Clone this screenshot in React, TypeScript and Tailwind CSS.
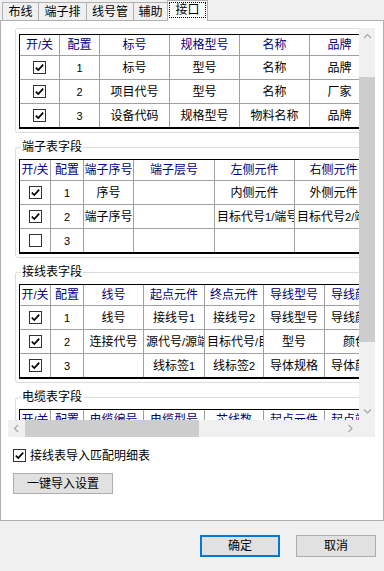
import type { ReactNode } from 'react'

type Cell = string | { text: string; left?: boolean }

interface FieldTable {
  title?: string
  cols: string[]
  header: string[]
  rows: { on: boolean; cells: Cell[] }[]
}

const tables: FieldTable[] = [
  {
    cols: ['w-[40px]', 'w-[40px]', 'w-[70px]', 'w-[70px]', 'w-[70px]', 'w-[60px]'],
    header: ['开/关', '配置', '标号', '规格型号', '名称', '品牌'],
    rows: [
      { on: true, cells: ['标号', '型号', '名称', '品牌'] },
      { on: true, cells: ['项目代号', '型号', '名称', '厂家'] },
      { on: true, cells: ['设备代码', '规格型号', '物料名称', '品牌'] },
    ],
  },
  {
    title: '端子表字段',
    cols: ['w-[31px]', 'w-[33px]', 'w-[50px]', 'w-[81px]', 'w-[80px]', 'w-[78px]'],
    header: ['开/关', '配置', '端子序号', '端子层号', '左侧元件', '右侧元件'],
    rows: [
      { on: true, cells: ['序号', '', '内侧元件', '外侧元件'] },
      {
        on: true,
        cells: ['端子序号', '', { text: '目标代号1/端号', left: true }, { text: '目标代号2/端号', left: true }],
      },
      { on: false, cells: ['', '', '', ''] },
    ],
  },
  {
    title: '接线表字段',
    cols: ['w-[31px]', 'w-[33px]', 'w-[60px]', 'w-[61px]', 'w-[59px]', 'w-[61px]', 'w-[61px]'],
    header: ['开/关', '配置', '线号', '起点元件', '终点元件', '导线型号', '导线颜色'],
    rows: [
      { on: true, cells: ['线号', '接线号1', '接线号2', '导线型号', '导线颜色'] },
      {
        on: true,
        cells: [
          '连接代号',
          { text: '源代号/源端号', left: true },
          { text: '目标代号/目标端号', left: true },
          '型号',
          '颜色',
        ],
      },
      { on: true, cells: ['', '线标签1', '线标签2', '导体规格', '导体颜色'] },
    ],
  },
  {
    title: '电缆表字段',
    cols: ['w-[31px]', 'w-[33px]', 'w-[60px]', 'w-[61px]', 'w-[59px]', 'w-[61px]', 'w-[61px]'],
    header: ['开/关', '配置', '电缆编号', '电缆型号', '芯线数', '起点元件', '起点端子'],
    rows: [
      { on: true, cells: ['电缆编号', '电缆型号', '芯线数', '起点元件', '起点端子'] },
      { on: true, cells: ['电缆代号', '型号', '芯数', '源代号', '源端号'] },
      { on: false, cells: ['', '', '', '', ''] },
    ],
  },
]

// digits and slashes come out smaller and thinner in the original
function Txt({ s }: { s: string }) {
  const parts = s.split(/([0-9/]+)/)
  return (
    <>
      {parts.map((p, i) =>
        /^[0-9/]+$/.test(p) ? (
          <span key={i} className="text-[11px]">
            {p}
          </span>
        ) : (
          p
        )
      )}
    </>
  )
}

function Check({ on }: { on: boolean }) {
  return (
    <span className="flex h-[13px] w-[13px] items-center justify-center border border-[#333333] bg-white">
      {on && (
        <svg width="11" height="11" viewBox="0 0 11 11">
          <path d="M1.8 5.6 L4.3 8.1 L9.2 2.6" fill="none" stroke="#000" strokeWidth="1.7" />
        </svg>
      )}
    </span>
  )
}

function FieldGrid({ t }: { t: FieldTable }) {
  const cell = 'flex shrink-0 items-center overflow-hidden whitespace-nowrap border-r border-[#a0a0a0]'
  return (
    <div className="w-max border-t border-l border-b-2 border-black">
      <div className="flex h-[21px] border-b border-[#a0a0a0] text-[#000080]">
        {t.header.map((h, i) => (
          <div key={i} className={`${t.cols[i]} ${cell} justify-center`}>
            <Txt s={h} />
          </div>
        ))}
      </div>
      {t.rows.map((r, ri) => (
        <div
          key={ri}
          className={`flex ${ri < t.rows.length - 1 ? 'h-[24px] border-b border-[#a0a0a0]' : 'h-[23px]'}`}
        >
          <div className={`${t.cols[0]} ${cell} justify-center`}>
            <Check on={r.on} />
          </div>
          <div className={`${t.cols[1]} ${cell} justify-center text-[11px]`}>{ri + 1}</div>
          {r.cells.map((c, ci) => {
            const v = typeof c === 'string' ? { text: c, left: false } : c
            return (
              <div
                key={ci}
                className={`${t.cols[ci + 2]} ${cell} ${v.left ? 'justify-start pl-[2px]' : 'justify-center'}`}
              >
                <Txt s={v.text} />
              </div>
            )
          })}
        </div>
      ))}
    </div>
  )
}

function Group({ title, children }: { title?: string; children: ReactNode }) {
  return (
    <div
      className={`relative w-[640px] rounded-[3px] border border-[#dcdcdc] pb-[3px] pl-[3px] ${
        title ? 'mt-[14px] pt-[11px]' : 'pt-[5px]'
      }`}
    >
      {title && (
        <span className="absolute -top-[9px] left-[5px] bg-white px-[1px] leading-[17px]">{title}</span>
      )}
      {children}
    </div>
  )
}

function Arrow({ dir }: { dir: 'up' | 'down' | 'left' | 'right' }) {
  const d = {
    up: 'M1 5 L4.5 1.5 L8 5',
    down: 'M1 1.5 L4.5 5 L8 1.5',
    left: 'M5 1 L1.5 4.5 L5 8',
    right: 'M1.5 1 L5 4.5 L1.5 8',
  }[dir]
  const vertical = dir === 'up' || dir === 'down'
  return (
    <svg width={vertical ? 9 : 7} height={vertical ? 7 : 9} viewBox={vertical ? '0 0 9 7' : '0 0 7 9'}>
      <path d={d} fill="none" stroke="#a6a6a6" strokeWidth="1.2" />
    </svg>
  )
}

const tabs = [
  { name: '布线', w: 'w-[36px]' },
  { name: '端子排', w: 'w-[48px]' },
  { name: '线号管', w: 'w-[47px]' },
  { name: '辅助', w: 'w-[34px]' },
]

export default function App() {
  return (
    <div className="flex h-[571px] w-[384px] flex-col overflow-hidden bg-[#f0f0f0] font-['Liberation_Sans','Noto_Sans_CJK_SC',sans-serif] text-[12px] leading-[16px] text-black">
      {/* tab strip */}
      <div className="relative z-10 flex h-[20px] items-start pl-[2px]">
        {tabs.map((t) => (
          <div
            key={t.name}
            className={`${t.w} mt-[2px] flex h-[18px] items-center justify-center border-t border-l border-[#b0b0b0] bg-[#f0f0f0]`}
          >
            {t.name}
          </div>
        ))}
        <div className="flex h-[21px] w-[41px] border-t border-r border-l border-[#b0b0b0] bg-white px-[1px] pt-[1px] pb-[3px]">
          <div className="flex flex-1 items-center justify-center border border-dotted border-black">接口</div>
        </div>
      </div>

      {/* tab page */}
      <div className="flex h-[501px] flex-col border border-[#b0b0b0] bg-white">
        <div className="mt-[7px] ml-[7px] grid h-[409px] w-[367px] grid-cols-[351px_16px] grid-rows-[392px_17px]">
          <div className="overflow-hidden bg-white pl-[7px]">
            {tables.map((t, i) => (
              <Group key={i} title={t.title}>
                <FieldGrid t={t} />
              </Group>
            ))}
          </div>
          <div className="flex flex-col bg-[#f0f0f0]">
            <div className="flex h-[17px] items-center justify-center">
              <Arrow dir="up" />
            </div>
            <div className="flex-1 pt-[32px]">
              <div className="h-[265px] bg-[#cdcdcd]" />
            </div>
            <div className="flex h-[17px] items-center justify-center">
              <Arrow dir="down" />
            </div>
          </div>
          <div className="flex bg-[#f0f0f0]">
            <div className="flex w-[17px] items-center justify-center">
              <Arrow dir="left" />
            </div>
            <div className="w-[174px] bg-[#cdcdcd]" />
            <div className="flex-1" />
            <div className="flex w-[17px] items-center justify-center">
              <Arrow dir="right" />
            </div>
          </div>
          <div className="bg-[#f0f0f0]" />
        </div>

        <div className="mt-[12px] ml-[12px] flex h-[13px] items-center gap-[4px]">
          <Check on />
          <span>接线表导入匹配明细表</span>
        </div>

        <button className="mt-[11px] ml-[12px] flex h-[21px] w-[100px] items-center justify-center border border-[#adadad] bg-[#e1e1e1]">
          一键导入设置
        </button>
      </div>

      {/* dialog buttons */}
      <div className="flex justify-end gap-[16px] pt-[14px] pr-[8px]">
        <button className="flex h-[22px] w-[80px] items-center justify-center border-2 border-[#0078d7] bg-[#e1e1e1]">
          确定
        </button>
        <button className="flex h-[22px] w-[80px] items-center justify-center border border-[#adadad] bg-[#e1e1e1]">
          取消
        </button>
      </div>
    </div>
  )
}
